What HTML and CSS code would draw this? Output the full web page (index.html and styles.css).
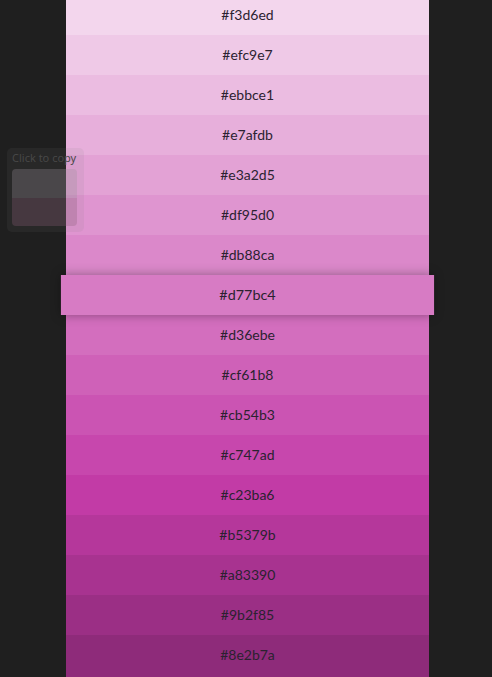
FILE: index.html
```html
<!DOCTYPE html>
<html lang="en">
<head>
  <meta charset="UTF-8">
  <title>Palette</title>
  <link rel="stylesheet" href="styles.css">
</head>
<body>

  <div class="tooltip">
    <div class="tooltip-label">Click to copy</div>
    <div class="tooltip-swatch">
      <div class="swatch-top"></div>
      <div class="swatch-bottom"></div>
    </div>
  </div>

  <div class="palette" id="palette"></div>

  <script>
    const colors = [
      '#f3d6ed', '#efc9e7', '#ebbce1', '#e7afdb', '#e3a2d5', '#df95d0',
      '#db88ca', '#d77bc4', '#d36ebe', '#cf61b8', '#cb54b3', '#c747ad',
      '#c23ba6', '#b5379b', '#a83390', '#9b2f85', '#8e2b7a'
    ];
    const active = '#d77bc4';

    const palette = document.getElementById('palette');
    for (const c of colors) {
      const row = document.createElement('div');
      row.className = c === active ? 'shade active' : 'shade';
      row.style.background = c;
      row.textContent = c;
      palette.appendChild(row);
    }
  </script>

</body>
</html>
```

FILE: styles.css
```css
body {
  margin: 0;
  background: #1f1f1f;
  font-family: Lato, "Noto Sans", sans-serif;
  overflow: hidden;
}
.palette {
  width: 363px;
  margin: -5px 0 0 66px;
}
.shade {
  height: 40px;
  line-height: 40px;
  text-align: center;
  font-size: 14px;
  color: #2b2230;
  position: relative;
}
.shade:last-child {
  height: 42px;
}
.shade.active {
  transform: scaleX(1.028);
  z-index: 2;
  box-shadow: 0 0 10px rgba(0, 0, 0, 0.35);
}
.tooltip {
  position: absolute;
  left: 7px;
  top: 148px;
  width: 67px;
  height: 74px;
  padding: 4px 5px 6px;
  border-radius: 5px;
  background: rgba(128, 128, 128, 0.1);
  z-index: 3;
}
.tooltip-label {
  font-family: "Noto Sans", sans-serif;
  font-size: 11px;
  color: #474747;
  line-height: 12px;
  margin-bottom: 5px;
  white-space: nowrap;
}
.tooltip-swatch {
  width: 65px;
  height: 57px;
  border-radius: 4px;
  overflow: hidden;
  display: flex;
  flex-direction: column;
}
.swatch-top {
  flex: 1;
  background: rgba(157, 146, 154, 0.3);
}
.swatch-bottom {
  flex: 1;
  background: rgba(143, 97, 123, 0.3);
}
```
